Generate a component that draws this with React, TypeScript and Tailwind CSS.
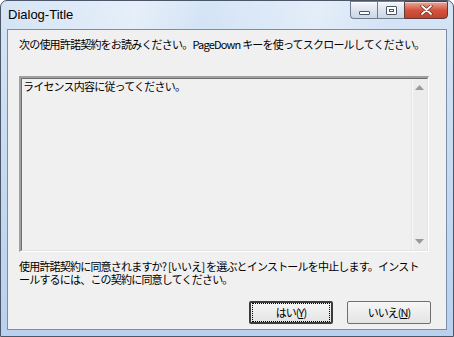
import type { ReactNode } from 'react';

const jp = "font-['Noto_Sans_CJK_JP','Noto_Sans',sans-serif]";

function CaptionButton({ kind }: { kind: 'min' | 'max' | 'close' }) {
  if (kind === 'close') {
    return (
      <div className="flex h-[18px] w-[44px] items-center justify-center rounded-br-[4px] border border-[#5b3a3a] bg-gradient-to-b from-[#e8a89c] via-[#d2553f] to-[#c2412e] shadow-[inset_0_1px_0_rgba(255,255,255,0.5)]">
        <svg width="13" height="10" viewBox="0 0 13 10">
          <path d="M2 1 L11 9 M11 1 L2 9" stroke="#5a2a22" strokeWidth="3.2" strokeLinecap="round" />
          <path d="M2 1 L11 9 M11 1 L2 9" stroke="#ffffff" strokeWidth="1.8" strokeLinecap="round" />
        </svg>
      </div>
    );
  }
  return (
    <div
      className={
        'flex h-[18px] w-[27px] items-center justify-center border border-r-0 border-[#707d8f] bg-gradient-to-b from-[#f4f7fb] via-[#dde5ef] to-[#cbd7e5] shadow-[inset_0_1px_0_rgba(255,255,255,0.8)] ' +
        (kind === 'min' ? 'rounded-bl-[4px]' : '')
      }
    >
      {kind === 'min' ? (
        <div className="mt-[5px] h-[4px] w-[11px] rounded-[1px] border border-[#4a5566] bg-white" />
      ) : (
        <div className="flex h-[9px] w-[11px] items-center justify-center rounded-[1px] border border-[#4a5566] bg-white">
          <div className="h-[3px] w-[5px] border border-[#4a5566]" />
        </div>
      )}
    </div>
  );
}

function Arrow({ up }: { up: boolean }) {
  return (
    <svg width="9" height="5" viewBox="0 0 9 5">
      <path d={up ? 'M4.5 0 L9 5 L0 5 Z' : 'M0 0 L9 0 L4.5 5 Z'} fill="#9a9a9a" />
    </svg>
  );
}

function Button({ children, primary }: { children: ReactNode; primary?: boolean }) {
  return (
    <div
      className={
        'flex h-[23px] w-[84px] items-center justify-center rounded-[2px] bg-gradient-to-b from-[#f6f6f6] to-[#e4e4e4] ' +
        (primary ? 'border-2 border-[#3c3c3c]' : 'border border-[#707070]')
      }
    >
      <div
        className={
          'flex h-full w-full items-center justify-center text-[11px] tracking-[-1px] text-black ' +
          jp +
          (primary ? ' m-[1px] border border-dotted border-black' : '')
        }
      >
        {children}
      </div>
    </div>
  );
}

export default function App() {
  return (
    <div className="h-[337px] w-[454px] overflow-hidden bg-white">
      <div className="flex h-full w-full flex-col rounded-t-[7px] border border-[#4b5768] bg-gradient-to-b from-[#d6e5f6] via-[#c6daf1] to-[#b9d1ee]">
        <div className="flex h-[28px] shrink-0 items-start justify-between bg-[linear-gradient(100deg,rgba(255,255,255,0.0)_0%,rgba(255,255,255,0.4)_30%,rgba(255,255,255,0)_45%,rgba(255,255,255,0.35)_70%,rgba(255,255,255,0)_85%)]">
          <div className="pl-[7px] pt-[6px] font-['Liberation_Sans',Arial,sans-serif] text-[13px] leading-[16px] text-black">
            Dialog-Title
          </div>
          <div className="mr-[5px] flex">
            <CaptionButton kind="min" />
            <CaptionButton kind="max" />
            <CaptionButton kind="close" />
          </div>
        </div>
        <div className="mx-[6px] flex h-[301px] shrink-0 flex-col border border-[#7c8ea6] bg-[#f0f0f0]">
          <div className={'ml-[11px] mt-[7px] text-[11px] leading-[14px] tracking-[-0.8px] text-black ' + jp}>
            次の使用許諾契約をお読みください。PageDown キーを使ってスクロールしてください。
          </div>
          <div className="ml-[11px] mt-[25px] flex h-[176px] w-[410px] border-b border-l-2 border-r border-t-2 border-[#a0a0a0] border-b-white border-r-white">
            <div className="flex flex-1 border border-[#6e6e6e] border-b-[#e3e3e3] border-r-[#e3e3e3]">
              <div className={'flex-1 pl-[1px] pt-0 text-[11px] leading-[14px] tracking-[-0.8px] text-black ' + jp}>
                ライセンス内容に従ってください。
              </div>
              <div className="flex w-[16px] flex-col items-center justify-between border-l border-[#e6e6e6] bg-[#ececec] py-[6px] shadow-[inset_1px_0_0_#fafafa]">
                <Arrow up />
                <Arrow up={false} />
              </div>
            </div>
          </div>
          <div className={'ml-[11px] mt-[8px] text-[11px] leading-[13px] tracking-[-0.8px] text-black ' + jp}>
            使用許諾契約に同意されますか? [いいえ] を選ぶとインストールを中止します。インスト
            <br />
            ールするには、この契約に同意してください。
          </div>
          <div className="mr-[15px] mt-[15px] flex justify-end gap-[14px]">
            <Button primary>
              はい(<span className="underline">Y</span>)
            </Button>
            <Button>
              いいえ(<span className="underline">N</span>)
            </Button>
          </div>
        </div>
      </div>
    </div>
  );
}
